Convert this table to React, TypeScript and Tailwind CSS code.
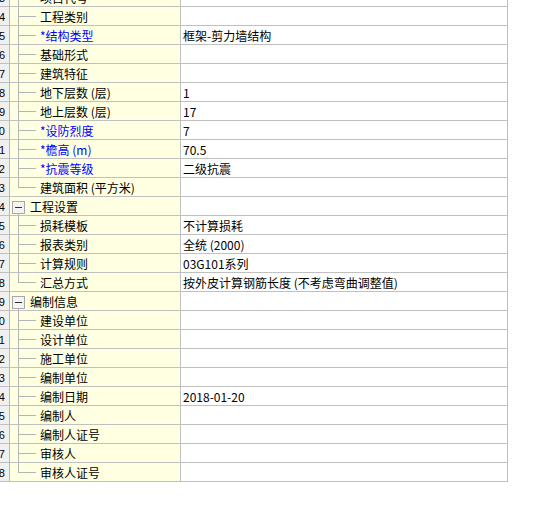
import React from "react";

type Kind = "mid" | "last" | "group";

type Row = {
  n: number;
  label: string;
  kind: Kind;
  value?: string;
  req?: boolean;
};

const rows: Row[] = [
  { n: 3, label: "项目代号", kind: "mid" },
  { n: 4, label: "工程类别", kind: "mid" },
  { n: 5, label: "*结构类型", kind: "mid", value: "框架-剪力墙结构", req: true },
  { n: 6, label: "基础形式", kind: "mid" },
  { n: 7, label: "建筑特征", kind: "mid" },
  { n: 8, label: "地下层数 (层)", kind: "mid", value: "1" },
  { n: 9, label: "地上层数 (层)", kind: "mid", value: "17" },
  { n: 10, label: "*设防烈度", kind: "mid", value: "7", req: true },
  { n: 11, label: "*檐高 (m)", kind: "mid", value: "70.5", req: true },
  { n: 12, label: "*抗震等级", kind: "mid", value: "二级抗震", req: true },
  { n: 13, label: "建筑面积 (平方米)", kind: "last" },
  { n: 14, label: "工程设置", kind: "group" },
  { n: 15, label: "损耗模板", kind: "mid", value: "不计算损耗" },
  { n: 16, label: "报表类别", kind: "mid", value: "全统 (2000)" },
  { n: 17, label: "计算规则", kind: "mid", value: "03G101系列" },
  { n: 18, label: "汇总方式", kind: "last", value: "按外皮计算钢筋长度 (不考虑弯曲调整值)" },
  { n: 19, label: "编制信息", kind: "group" },
  { n: 20, label: "建设单位", kind: "mid" },
  { n: 21, label: "设计单位", kind: "mid" },
  { n: 22, label: "施工单位", kind: "mid" },
  { n: 23, label: "编制单位", kind: "mid" },
  { n: 24, label: "编制日期", kind: "mid", value: "2018-01-20" },
  { n: 25, label: "编制人", kind: "mid" },
  { n: 26, label: "编制人证号", kind: "mid" },
  { n: 27, label: "审核人", kind: "mid" },
  { n: 28, label: "审核人证号", kind: "last" },
];

const TreeLines = ({ kind }: { kind: Kind }) => {
  if (kind === "group") {
    return (
      <svg width="20" height="18" className="shrink-0" shapeRendering="crispEdges">
        <rect x="2.5" y="4.5" width="12" height="12" fill="#f4f4f4" stroke="#a8a8a8" />
        <line x1="5" y1="10.5" x2="12" y2="10.5" stroke="#303030" />
        <line x1="8.5" y1="17" x2="8.5" y2="18" stroke="#b4b4b4" />
      </svg>
    );
  }
  return (
    <svg width="30" height="18" className="shrink-0" shapeRendering="crispEdges">
      <line x1="8.5" y1="0" x2="8.5" y2={kind === "last" ? 10 : 18} stroke="#b4b4b4" />
      <line x1="8" y1="9.5" x2="26" y2="9.5" stroke="#b4b4b4" />
    </svg>
  );
};

export default function App() {
  return (
    <div
      className="w-[538px] h-[512px] overflow-hidden bg-white text-[12px]"
      style={{ fontFamily: '"Noto Sans CJK SC", "Liberation Sans", sans-serif' }}
    >
      {/* grid is scrolled: row 3 is half hidden, row numbers are clipped */}
      <div className="-mt-[12px] w-[508px]">
        {rows.map((r) => (
          <div key={r.n} className="flex h-[19px] border-b border-[#c0c0c0]">
            <div className="w-[10px] shrink-0 flex justify-end overflow-hidden bg-[#f0f0f0] border-r border-[#b8b8b8] pr-[4px] text-[11px] leading-[18px] text-black whitespace-nowrap font-['Liberation_Sans']">
              <span className="pt-[1px]">{r.n}</span>
            </div>
            <div className="w-[171px] shrink-0 flex bg-[#ffffe1] border-r border-[#c0c0c0]">
              <TreeLines kind={r.kind} />
              <span
                className={`leading-[18px] pt-[1px] whitespace-nowrap ${
                  r.req ? "text-[#0000ff]" : "text-black"
                }`}
              >
                {r.label}
              </span>
            </div>
            <div className="flex-1 border-r border-[#c0c0c0] pl-[2px] leading-[18px] text-black whitespace-nowrap">
              <span className="pt-[1px] inline-block">{r.value}</span>
            </div>
          </div>
        ))}
      </div>
    </div>
  );
}
